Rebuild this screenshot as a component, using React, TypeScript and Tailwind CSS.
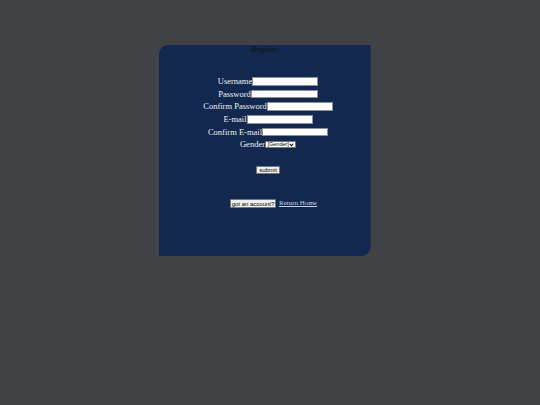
import React from "react";

const rows = [
  { label: "Username", w: "w-[66px]" },
  { label: "Password", w: "w-[67px]" },
  { label: "Confirm Password", w: "w-[66px]" },
  { label: "E-mail", w: "w-[66px]" },
  { label: "Confirm E-mail", w: "w-[66px]" },
];

function Field({ label, w }: { label: string; w: string }) {
  return (
    <div className="flex h-[12.67px] items-center justify-center">
      <span className="text-[8.5px] leading-none text-[#eef0f5]">{label}</span>
      <input
        type="text"
        className={`h-[8.5px] ${w} border-[0.5px] border-[#8a8f99] bg-white`}
      />
    </div>
  );
}

export default function App() {
  return (
    <div className="min-h-screen w-full bg-[#414246] pt-[45px] pl-[159px] font-['Liberation_Serif',serif]">
      <div className="flex h-[211px] w-[211px] flex-col items-center rounded-tl-[9px] rounded-br-[9px] bg-[#13284f] shadow-[1px_0_0_#2a3344]">
        <div className="pt-[1px] text-[8px] leading-[8px] text-[#111318]">Register</div>

        <div className="mt-[21px] flex flex-col pl-[7px]">
          {rows.map((r) => (
            <Field key={r.label} label={r.label} w={r.w} />
          ))}
          <div className="flex h-[12.67px] items-center justify-center">
            <span className="text-[8.5px] leading-none text-[#eef0f5]">Gender</span>
            <span className="flex h-[7.5px] w-[31px] items-center justify-between whitespace-nowrap rounded-[1px] border-[0.5px] border-[#767676] bg-white pl-[1.5px] pr-[1px] font-['Liberation_Sans',sans-serif] text-[5.5px] leading-none text-black">
              [Gender]
              <svg width="5" height="4" viewBox="0 0 10 8">
                <path d="M1.5 1.5 L5 5.5 L8.5 1.5" fill="none" stroke="black" strokeWidth="2.2" />
              </svg>
            </span>
          </div>
        </div>

        <button className="ml-[7px] mt-[15px] flex h-[8px] w-[23.5px] items-center justify-center whitespace-nowrap rounded-[1px] border-[0.5px] border-[#767676] bg-[#efefef] font-['Liberation_Sans',sans-serif] text-[6px] leading-none text-black">
          submit
        </button>

        <div className="ml-[18px] mt-[25.5px] flex items-center gap-[3px]">
          <button className="flex h-[8.5px] w-[46px] items-center justify-center whitespace-nowrap rounded-[1px] border-[0.5px] border-[#767676] bg-[#efefef] font-['Liberation_Sans',sans-serif] text-[6px] leading-none text-black">
            got an account?
          </button>
          <a href="#" className="whitespace-nowrap text-[7px] leading-none text-[#c9d2e6] underline">
            Return Home
          </a>
        </div>
      </div>
    </div>
  );
}
